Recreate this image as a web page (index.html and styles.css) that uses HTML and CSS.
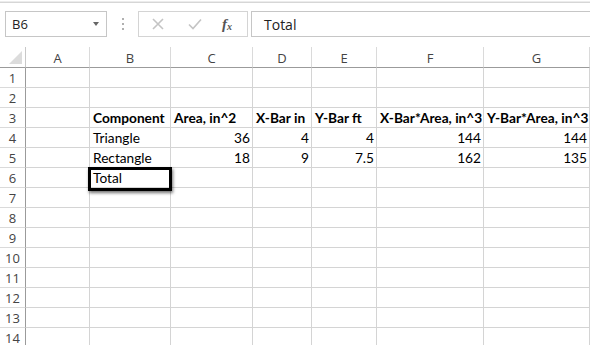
FILE: index.html
```html
<!DOCTYPE html>
<html>
<head>
<meta charset="utf-8">
<link rel="stylesheet" href="styles.css">
</head>
<body>
<div class="topline"></div>
<div class="fbar">
  <div class="namebox"><span>B6</span><span class="arrow"></span></div>
  <div class="dots"><i></i><i></i><i></i></div>
  <div class="btns">
    <svg class="ic-x" width="12" height="12" viewBox="0 0 12 12"><path d="M1 1L11 11M11 1L1 11" stroke="#c4c4c4" stroke-width="1.6" fill="none"/></svg>
    <svg class="ic-ok" width="14" height="12" viewBox="0 0 14 12"><path d="M1 6.5L5 10.5L13 1.5" stroke="#c4c4c4" stroke-width="1.6" fill="none"/></svg>
    <span class="fx">f<sub>x</sub></span>
  </div>
  <div class="finput">Total</div>
</div>
<div class="sheet">
  <div class="ch corner"><span class="tri"></span></div>
  <div class="ch">A</div><div class="ch">B</div><div class="ch">C</div><div class="ch">D</div><div class="ch">E</div><div class="ch">F</div><div class="ch">G</div>

  <div class="rh">1</div><div class="c"></div><div class="c"></div><div class="c"></div><div class="c"></div><div class="c"></div><div class="c"></div><div class="c"></div>
  <div class="rh">2</div><div class="c"></div><div class="c"></div><div class="c"></div><div class="c"></div><div class="c"></div><div class="c"></div><div class="c"></div>
  <div class="rh">3</div><div class="c"></div><div class="c b">Component</div><div class="c b">Area, in^2</div><div class="c b">X-Bar in</div><div class="c b">Y-Bar ft</div><div class="c b">X-Bar*Area, in^3</div><div class="c b">Y-Bar*Area, in^3</div>
  <div class="rh">4</div><div class="c"></div><div class="c">Triangle</div><div class="c n">36</div><div class="c n">4</div><div class="c n">4</div><div class="c n">144</div><div class="c n">144</div>
  <div class="rh">5</div><div class="c"></div><div class="c">Rectangle</div><div class="c n">18</div><div class="c n">9</div><div class="c n">7.5</div><div class="c n">162</div><div class="c n">135</div>
  <div class="rh">6</div><div class="c"></div><div class="c sel">Total<span class="selbox"></span></div><div class="c"></div><div class="c"></div><div class="c"></div><div class="c"></div><div class="c"></div>
  <div class="rh">7</div><div class="c"></div><div class="c"></div><div class="c"></div><div class="c"></div><div class="c"></div><div class="c"></div><div class="c"></div>
  <div class="rh">8</div><div class="c"></div><div class="c"></div><div class="c"></div><div class="c"></div><div class="c"></div><div class="c"></div><div class="c"></div>
  <div class="rh">9</div><div class="c"></div><div class="c"></div><div class="c"></div><div class="c"></div><div class="c"></div><div class="c"></div><div class="c"></div>
  <div class="rh">10</div><div class="c"></div><div class="c"></div><div class="c"></div><div class="c"></div><div class="c"></div><div class="c"></div><div class="c"></div>
  <div class="rh">11</div><div class="c"></div><div class="c"></div><div class="c"></div><div class="c"></div><div class="c"></div><div class="c"></div><div class="c"></div>
  <div class="rh">12</div><div class="c"></div><div class="c"></div><div class="c"></div><div class="c"></div><div class="c"></div><div class="c"></div><div class="c"></div>
  <div class="rh">13</div><div class="c"></div><div class="c"></div><div class="c"></div><div class="c"></div><div class="c"></div><div class="c"></div><div class="c"></div>
  <div class="rh">14</div><div class="c"></div><div class="c"></div><div class="c"></div><div class="c"></div><div class="c"></div><div class="c"></div><div class="c"></div>
</div>
</body>
</html>
```

FILE: styles.css
```css
* { box-sizing: border-box; }
html, body { margin: 0; padding: 0; background: #fff; overflow: hidden; }
body { width: 590px; height: 345px; font-family: "Open Sans", "Noto Sans", sans-serif; }

.topline { height: 3px; border-top: 1px solid #fff; border-bottom: 1px solid #d6d6d6; background: #ececec; }

.fbar { display: flex; align-items: stretch; height: 26px; margin-top: 8px; padding-left: 5px; }
.namebox { width: 102px; border: 1px solid #c6c6c6; display: flex; align-items: center; justify-content: space-between; padding: 0 7px 0 6px; font-size: 13px; color: #222; }
.arrow { width: 0; height: 0; border-left: 3.5px solid transparent; border-right: 3.5px solid transparent; border-top: 4px solid #666; }
.dots { width: 31px; display: flex; flex-direction: column; align-items: center; justify-content: center; gap: 3px; }
.dots i { display: block; width: 2px; height: 2px; background: #b0b0b0; }
.btns { width: 110px; border: 1px solid #d4d4d4; display: flex; align-items: center; padding-left: 13px; }
.ic-x { margin-right: 24px; }
.ic-ok { margin-right: 20px; }
.fx { font-family: "Liberation Serif", serif; font-style: italic; font-size: 15px; color: #555; font-weight: bold; }
.fx sub { font-size: 10px; vertical-align: -1px; }
.finput { flex: 1; margin-left: 3px; border-top: 1px solid #c6c6c6; border-bottom: 1px solid #c6c6c6; border-left: 1px solid #c6c6c6; display: flex; align-items: center; padding-left: 12px; font-size: 14px; color: #222; }

.sheet { margin-top: 10px; display: grid; grid-template-columns: 26px 64px 81px 82px 59px 65px 107px 106px; grid-template-rows: 21px; grid-auto-rows: 20px; }
.ch { border-right: 1px solid #dadada; border-bottom: 1px solid #9b9b9b; font-size: 13px; color: #444; display: flex; align-items: center; justify-content: center; padding-top: 1px; }
.ch.corner { position: relative; border-right-color: #c8c8c8; }
.tri { position: absolute; right: 3px; bottom: 3px; width: 0; height: 0; border-left: 13px solid transparent; border-bottom: 13px solid #dcdcdc; }
.rh { border-right: 1px solid #9b9b9b; border-bottom: 1px solid #dadada; font-size: 13px; color: #444; display: flex; align-items: center; justify-content: center; padding-top: 1px; }
.c { border-right: 1px solid #d4d4d4; border-bottom: 1px solid #d4d4d4; font-family: "Lato", "Open Sans", sans-serif; font-size: 13.7px; color: #000; padding: 1px 2px 0 3px; line-height: 18px; white-space: nowrap; overflow: visible; }
.c.b { font-weight: bold; }
.c.n { text-align: right; }
.sel { position: relative; }
.selbox { position: absolute; left: -2px; top: -1px; width: 84px; height: 24px; border: 3px solid #000; box-shadow: 1px 2px 3px rgba(0,0,0,0.55); }
```
